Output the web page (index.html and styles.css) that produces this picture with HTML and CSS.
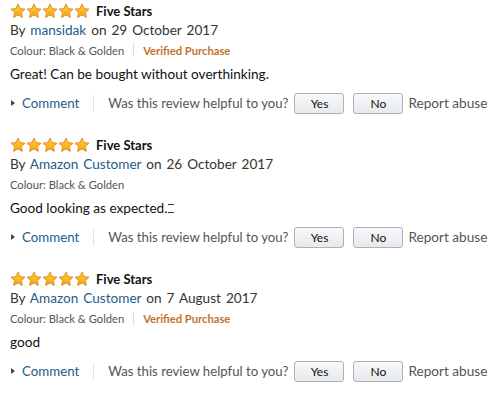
FILE: index.html
```html
<!DOCTYPE html>
<html>
<head>
<meta charset="utf-8">
<link rel="stylesheet" href="styles.css">
</head>
<body>
<svg width="0" height="0" class="defs">
  <defs>
    <linearGradient id="sg" x1="0" y1="0" x2="0" y2="1">
      <stop offset="0" stop-color="#ffce3a"/>
      <stop offset="1" stop-color="#f7a21b"/>
    </linearGradient>
    <symbol id="star" viewBox="0 0 24 24">
      <path d="M12 1.5l3.2 6.9 7.4.8-5.5 5.1 1.5 7.4L12 17.9l-6.6 3.8 1.5-7.4-5.5-5.1 7.4-.8z" fill="url(#sg)" stroke="#d98a17" stroke-width="1.3" stroke-linejoin="round"/>
    </symbol>
  </defs>
</svg>
<div class="reviews">
  <div class="review">
    <div class="title-row">
      <span class="stars"><svg><use href="#star"/></svg><svg><use href="#star"/></svg><svg><use href="#star"/></svg><svg><use href="#star"/></svg><svg><use href="#star"/></svg></span>
      <span class="title">Five Stars</span>
    </div>
    <div class="byline">By <a class="author">mansidak</a> on 29 October 2017</div>
    <div class="meta"><span>Colour: Black &amp; Golden</span><span class="sep"></span><span class="verified">Verified Purchase</span></div>
    <div class="body">Great! Can be bought without overthinking.</div>
    <div class="actions">
      <span class="tri"></span><a class="comment">Comment</a><span class="sep tall"></span>
      <span class="helpful">Was this review helpful to you?</span>
      <button class="btn">Yes</button><button class="btn">No</button>
      <span class="report">Report abuse</span>
    </div>
  </div>
  <div class="review">
    <div class="title-row">
      <span class="stars"><svg><use href="#star"/></svg><svg><use href="#star"/></svg><svg><use href="#star"/></svg><svg><use href="#star"/></svg><svg><use href="#star"/></svg></span>
      <span class="title">Five Stars</span>
    </div>
    <div class="byline">By <a class="author">Amazon Customer</a> on 26 October 2017</div>
    <div class="meta"><span>Colour: Black &amp; Golden</span></div>
    <div class="body">Good looking as expected.<span class="box"></span></div>
    <div class="actions">
      <span class="tri"></span><a class="comment">Comment</a><span class="sep tall"></span>
      <span class="helpful">Was this review helpful to you?</span>
      <button class="btn">Yes</button><button class="btn">No</button>
      <span class="report">Report abuse</span>
    </div>
  </div>
  <div class="review">
    <div class="title-row">
      <span class="stars"><svg><use href="#star"/></svg><svg><use href="#star"/></svg><svg><use href="#star"/></svg><svg><use href="#star"/></svg><svg><use href="#star"/></svg></span>
      <span class="title">Five Stars</span>
    </div>
    <div class="byline">By <a class="author">Amazon Customer</a> on 7 August 2017</div>
    <div class="meta"><span>Colour: Black &amp; Golden</span><span class="sep"></span><span class="verified">Verified Purchase</span></div>
    <div class="body">good</div>
    <div class="actions">
      <span class="tri"></span><a class="comment">Comment</a><span class="sep tall"></span>
      <span class="helpful">Was this review helpful to you?</span>
      <button class="btn">Yes</button><button class="btn">No</button>
      <span class="report">Report abuse</span>
    </div>
  </div>
</div>
</body>
</html>
```
FILE: styles.css
```css
html, body { margin: 0; background: #fff; }
body { font-family: Lato, "Open Sans", sans-serif; color: #111; width: 500px; height: 406px; overflow: hidden; white-space: nowrap; }
.defs { position: absolute; width: 0; height: 0; }
.reviews { padding: 2px 0 0 10px; display: flex; flex-direction: column; gap: 21px; }
.review { display: flex; flex-direction: column; }
.title-row { display: flex; align-items: center; height: 18px; }
.stars { display: flex; }
.stars svg { width: 16px; height: 16px; }
.title { font-weight: 700; font-size: 13px; margin-left: 6px; color: #111; }
.byline { font-size: 13.6px; color: #333; height: 20px; line-height: 20px; word-spacing: 1.5px; }
.author { color: #1d5c8c; }
.meta { font-size: 11.2px; color: #555; display: flex; align-items: center; height: 20px; }
.sep { display: inline-block; width: 1px; height: 14px; background: #ddd; margin: 0 9px; }
.verified { color: #c4712b; font-weight: 700; }
.body { font-size: 13.6px; color: #111; margin-top: 4px; height: 20px; line-height: 20px; display: flex; align-items: center; }
.box { display: inline-block; width: 6px; height: 7px; border-top: 1px solid #333; border-bottom: 1px solid #333; margin-left: 1px; }
.actions { display: flex; align-items: center; margin-top: 7px; height: 24px; font-size: 13.2px; }
.tri { width: 0; height: 0; border-left: 4px solid #444; border-top: 3.5px solid transparent; border-bottom: 3.5px solid transparent; margin-left: 1px; margin-right: 7px; }
.comment { color: #1d5c8c; font-size: 13.3px; }
.sep.tall { height: 17px; margin: 0 14px 0 14px; background: #e3e3e3; }
.helpful { color: #555; }
.btn { font-family: inherit; font-size: 12px; color: #111; width: 50px; height: 21px; margin-left: 6px; padding: 0; border: 1px solid #adb1b8; border-radius: 3px; background: linear-gradient(#f7f8fa, #e7e9ec); box-sizing: border-box; }
.btn + .btn { margin-left: 9px; }
.report { color: #555; margin-left: 5px; font-size: 13.6px; }
```
